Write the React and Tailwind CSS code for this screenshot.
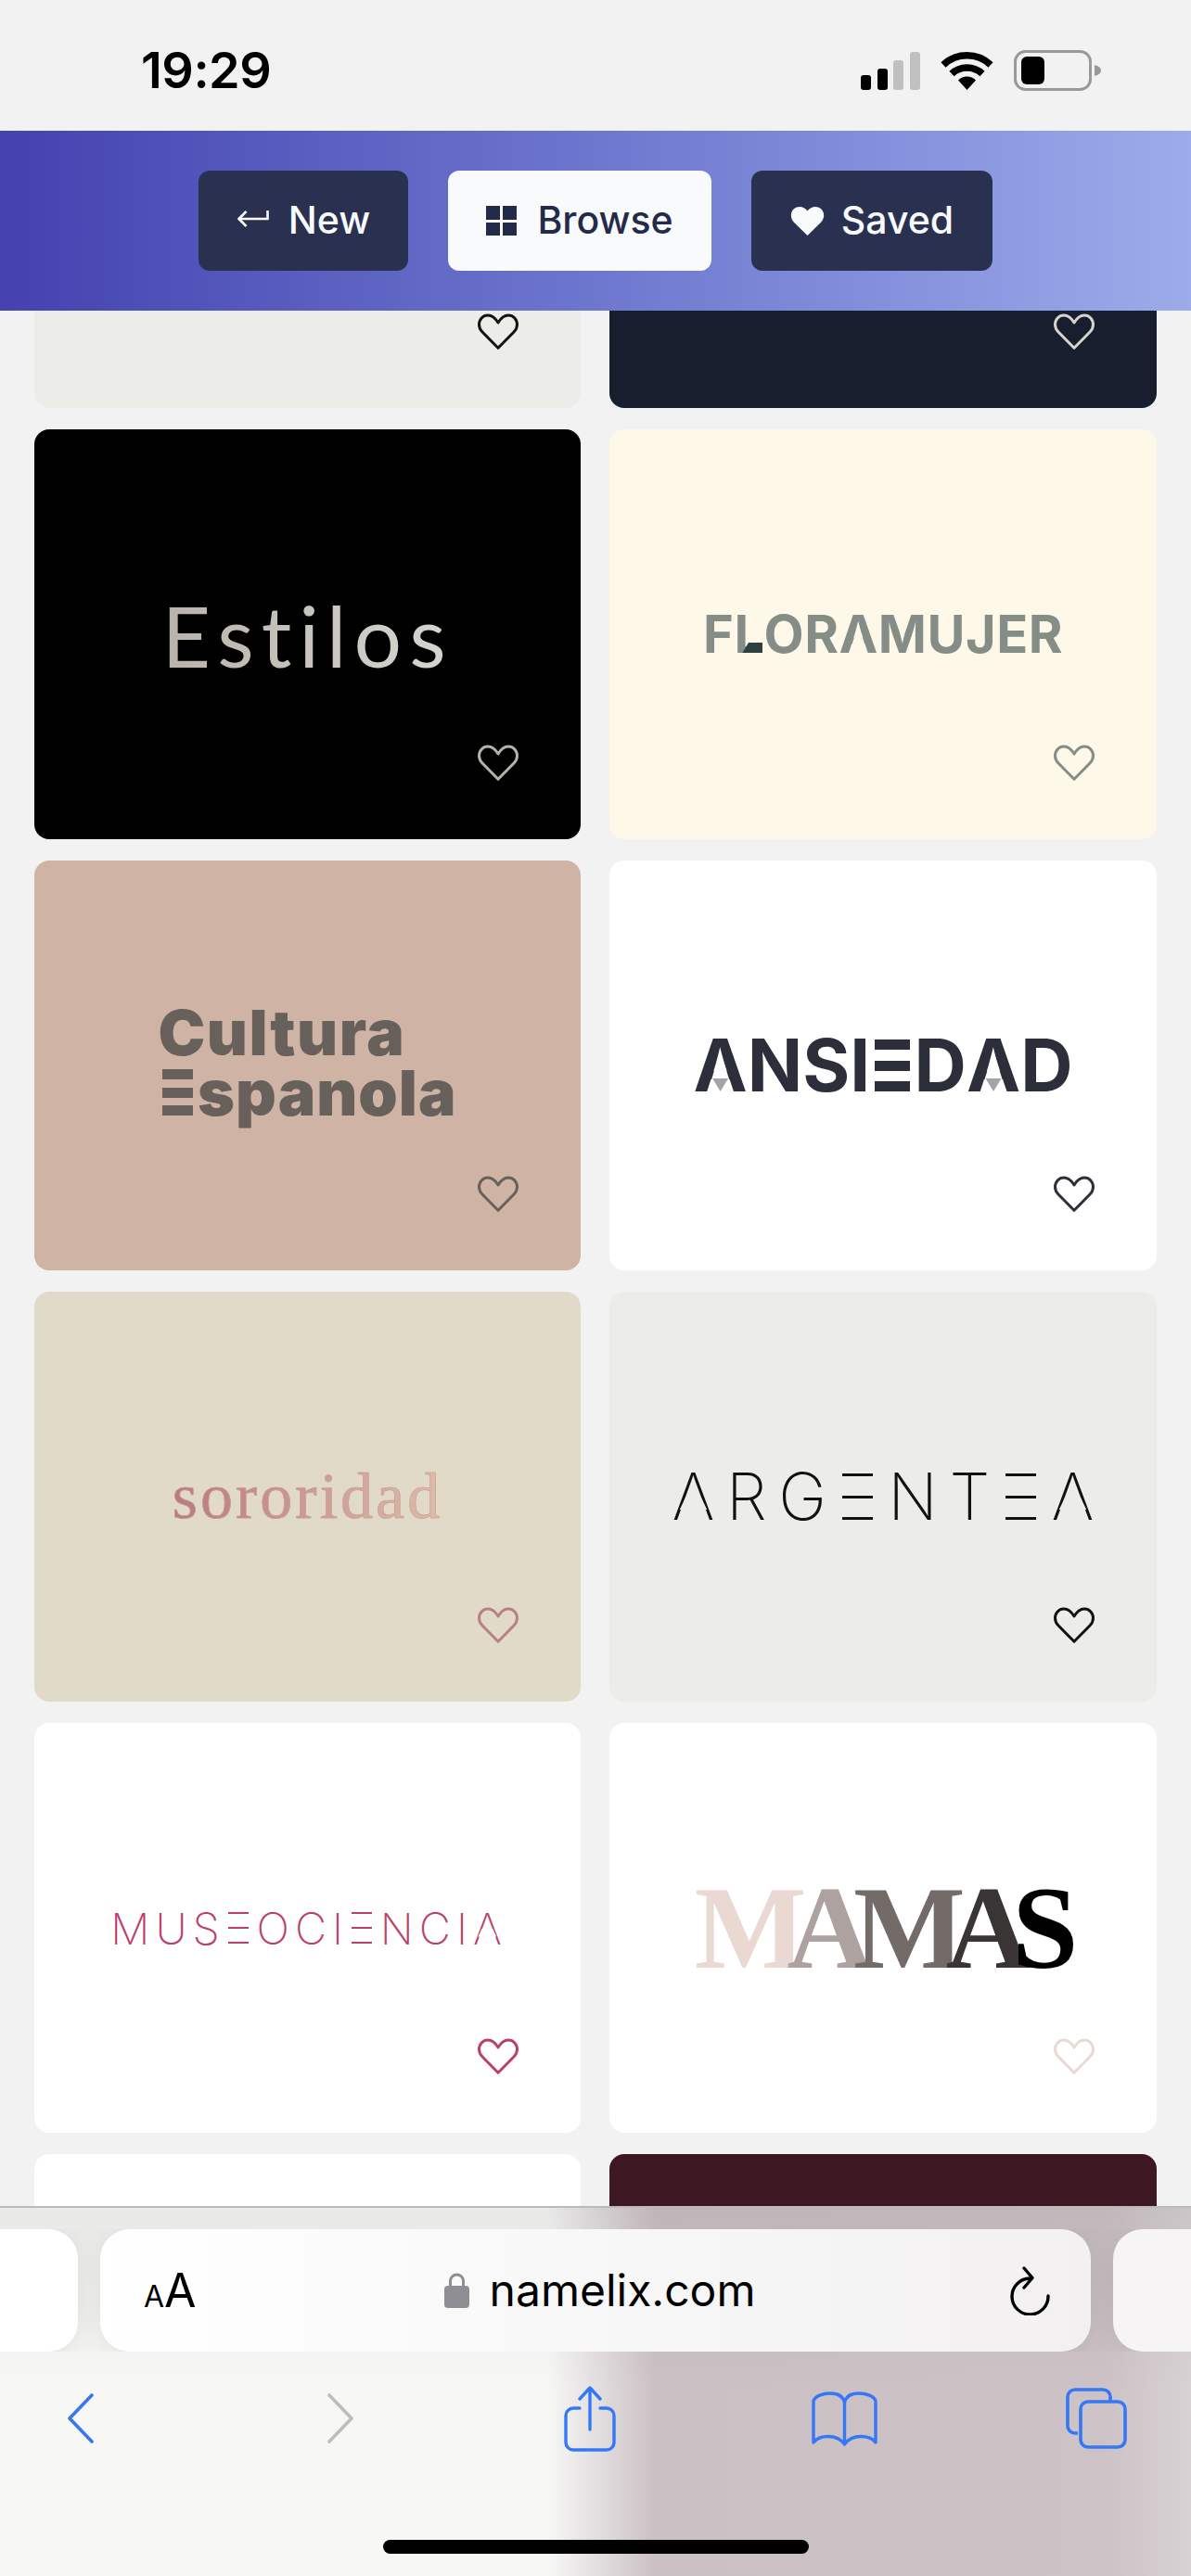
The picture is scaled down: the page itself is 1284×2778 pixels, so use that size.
// bare E: the letter stays as text but is shown as three bars
function BarE({ bar, thick, gap }) {
  return (
    <span className={`relative inline-block leading-none tracking-normal text-transparent ${gap}`}>
      E
      <span className="absolute inset-x-[0.06em] top-[0.137em] flex h-[0.727em] flex-col justify-between">
        <span className={`${bar} ${thick}`} />
        <span className={`${bar} ${thick}`} />
        <span className={`${bar} ${thick}`} />
      </span>
    </span>
  );
}

// A with no crossbar
function OpenA({ cover, cut, gap, children }) {
  return (
    <span className={`relative inline-block leading-none tracking-normal ${gap}`}>
      A
      <span className={`absolute inset-0 ${cover} ${cut}`} />
      {children}
    </span>
  );
}

function CardHeart({ className }) {
  return (
    <svg
      viewBox="0 0 44 39"
      fill="none"
      stroke="currentColor"
      strokeWidth="3"
      strokeLinejoin="round"
      className={`absolute right-[67px] bottom-[63px] h-[39px] w-[44px] ${className}`}
    >
      <path d="M22 10 C25 5 29 2 33 2 C38.5 2 42.5 6.5 42.5 12 C42.5 15.5 41 18 39 20 L22 37.3 L5 20 C3 18 1.5 15.5 1.5 12 C1.5 6.5 5.5 2 11 2 C15 2 19 5 22 10 Z" />
    </svg>
  );
}

const thinCut = "[clip-path:polygon(31%_52%,69%_52%,82%_70%,18%_70%)]";
const boldCut = "[clip-path:polygon(50%_30%,68%_73%,32%_73%)]";

const cards = [
  { bg: "bg-[#ecede8]", heart: "text-[#111111]" },
  { bg: "bg-[#171e2e]", heart: "text-[#d5d5cc]" },
  {
    bg: "bg-black",
    heart: "text-[#b5b3ab]",
    logo: (
      <span className="bg-linear-to-r from-[#b8b3aa] to-[#d6d6d1] bg-clip-text font-['Lato',sans-serif] text-[91px] leading-none font-normal tracking-[8px] text-transparent">
        Estilos
      </span>
    ),
  },
  {
    bg: "bg-[#fef8e8]",
    heart: "text-[#858d87]",
    logo: (
      <span className="text-[56px] leading-none font-bold tracking-[0.5px] text-[#858d87]">
        F
        <span className="relative inline-block">
          L
          <span className="absolute bottom-[8px] left-[9px] h-[11px] w-[22px] bg-[#2f4040] [clip-path:polygon(30%_0,100%_0,100%_100%,0_100%)]" />
        </span>
        OR
        <OpenA cover="bg-[#fef8e8]" cut={boldCut} gap="mr-[0.5px]" />
        MUJER
      </span>
    ),
  },
  {
    bg: "bg-[#cfb4a6]",
    heart: "text-[#68605a]",
    logo: (
      <div className="-mt-[4px] text-[68px] leading-[62px] font-black tracking-[1px] text-[#68605a]">
        <div className="tracking-[1.6px]">Cultura</div>
        <div>
          <BarE bar="bg-[#68605a]" thick="h-[11px]" gap="mr-[1px]" />
          spanola
        </div>
      </div>
    ),
  },
  {
    bg: "bg-white",
    heart: "text-[#2c2e3a]",
    logo: (
      <span className="text-[78px] leading-none font-bold text-[#2c2e3a]">
        <OpenA cover="bg-white" cut={boldCut}>
          <span className="absolute bottom-[11px] left-1/2 h-[14px] w-[17px] -translate-x-1/2 bg-[#a3a4a9] [clip-path:polygon(0_0,100%_0,50%_100%)]" />
        </OpenA>
        NSI
        <BarE bar="bg-[#2c2e3a]" thick="h-[11px]" />
        D
        <OpenA cover="bg-white" cut={boldCut}>
          <span className="absolute bottom-[11px] left-1/2 h-[14px] w-[17px] -translate-x-1/2 bg-[#a3a4a9] [clip-path:polygon(0_0,100%_0,50%_100%)]" />
        </OpenA>
        D
      </span>
    ),
  },
  {
    bg: "bg-[#e1dac8]",
    heart: "text-[#b97f82]",
    logo: (
      <span className="bg-linear-to-r from-[#b97a80] to-[#dcbca8] bg-clip-text font-['Liberation_Serif',serif] text-[70px] leading-none font-normal tracking-[3px] text-transparent [-webkit-text-stroke:0.6px_#c99f96]">
        sororidad
      </span>
    ),
  },
  {
    bg: "bg-[#ecede8]",
    heart: "text-[#111111]",
    logo: (
      <span className="text-[70px] leading-none font-extralight tracking-[12.5px] text-[#111111]">
        <OpenA cover="bg-[#ecede8]" cut={thinCut} gap="mr-[12.5px]" />
        RG
        <BarE bar="bg-[#111111]" thick="h-[3px]" gap="mr-[12.5px]" />
        NT
        <BarE bar="bg-[#111111]" thick="h-[3px]" gap="mr-[12.5px]" />
        <OpenA cover="bg-[#ecede8]" cut={thinCut} />
      </span>
    ),
  },
  {
    bg: "bg-white",
    heart: "text-[#bb3f6c]",
    logo: (
      <span className="-ml-[3px] text-[47px] leading-none font-extralight tracking-[6px] text-[#bb3f6c]">
        MUS
        <BarE bar="bg-[#bb3f6c]" thick="h-[2px]" gap="mr-[6px]" />
        OCI
        <BarE bar="bg-[#bb3f6c]" thick="h-[2px]" gap="mr-[6px]" />
        NCI
        <OpenA cover="bg-white" cut={thinCut} />
      </span>
    ),
  },
  {
    bg: "bg-white",
    heart: "text-[#ead9d3]",
    logo: (
      <span className="pr-[14px] font-['Liberation_Serif',serif] text-[128px] leading-none font-bold tracking-[-21px]">
        <span className="text-[#ead9d3]">M</span>
        <span className="text-[#aea2a0]">A</span>
        <span className="text-[#736b68]">M</span>
        <span className="text-[#3a3535]">A</span>
        <span className="text-black">S</span>
      </span>
    ),
  },
  { bg: "bg-white", heart: "text-white" },
  { bg: "bg-[#3d1722]", heart: "text-white" },
];

function StatusBar() {
  return (
    <div className="flex h-[141px] shrink-0 items-center justify-between bg-[#f2f2f2] pr-[97px] pl-[152px]">
      <span className="pt-[10px] text-[54px] leading-none font-semibold tracking-[-0.5px] text-black">19:29</span>
      <div className="flex items-center gap-[22px] pt-[10px]">
        <svg viewBox="0 0 64 42" className="h-[42px] w-[64px]">
          <rect x="0" y="26" width="11" height="16" rx="3" fill="#000" />
          <rect x="18" y="19" width="11" height="23" rx="3" fill="#000" />
          <rect x="35" y="10" width="11" height="32" rx="3" fill="#c0c0c0" />
          <rect x="53" y="1" width="11" height="41" rx="3" fill="#c0c0c0" />
        </svg>
        <svg viewBox="0 0 57 42" className="h-[42px] w-[57px]" fill="none" stroke="#000" strokeWidth="7.5">
          <path d="M3 15 A37 37 0 0 1 54 15" />
          <path d="M12 24.5 A24 24 0 0 1 45 24.5" />
          <path d="M28.5 42 L19 31.5 A13.5 13.5 0 0 1 38 31.5 Z" fill="#000" stroke="none" />
        </svg>
        <svg viewBox="0 0 94 44" className="h-[44px] w-[94px]">
          <rect x="1.5" y="1.5" width="81" height="41" rx="11" fill="none" stroke="#999" strokeWidth="3" />
          <rect x="8" y="7" width="25" height="30" rx="6" fill="#000" />
          <path d="M87 16 C91 17 94 19 94 22 C94 25 91 27 87 28 Z" fill="#999" />
        </svg>
      </div>
    </div>
  );
}

function Header() {
  return (
    <div className="z-10 flex h-[194px] shrink-0 items-center bg-linear-to-r from-[#4541b0] to-[#9dabea] pl-[214px]">
      <button className="flex h-[108px] w-[226px] items-center justify-center gap-[21px] rounded-[12px] bg-[#2a3150] text-[41px] font-medium text-[#f8fafc]">
        <svg viewBox="0 0 35 20" className="-mt-[4px] h-[20px] w-[35px]" fill="none" stroke="currentColor" strokeWidth="2.6">
          <path d="M33.5 1 V10 H2.5" />
          <path d="M10.5 2 L2.5 10 L10.5 18" />
        </svg>
        New
      </button>
      <button className="ml-[43px] flex h-[108px] w-[284px] items-center justify-center gap-[22px] rounded-[12px] bg-[#f8fafc] text-[41px] font-medium text-[#232a4a]">
        <span className="grid h-[32px] w-[33px] grid-cols-2 gap-[3px]">
          <span className="bg-[#232a4a]" />
          <span className="bg-[#232a4a]" />
          <span className="bg-[#232a4a]" />
          <span className="bg-[#232a4a]" />
        </span>
        Browse
      </button>
      <button className="ml-[43px] flex h-[108px] w-[260px] items-center justify-center gap-[18px] rounded-[12px] bg-[#2a3150] text-[41px] font-medium text-[#f8fafc]">
        <svg viewBox="0 0 24 21" className="h-[32px] w-[37px]" fill="currentColor">
          <path d="M12 21 L2.6 11.8 C-0.3 9 -0.3 4.6 2.4 2.2 C5.2 -0.3 9.6 0.2 12 3.6 C14.4 0.2 18.8 -0.3 21.6 2.2 C24.3 4.6 24.3 9 21.4 11.8 Z" />
        </svg>
        Saved
      </button>
    </div>
  );
}

function CardGrid() {
  return (
    <div className="min-h-0 flex-1 overflow-hidden pl-[37px]">
      <div className="-mt-[337px] grid grid-cols-[589px_590px] auto-rows-[442px] gap-x-[31px] gap-y-[23px]">
        {cards.map((card, i) => (
          <div key={i} className={`relative flex items-center justify-center rounded-[16px] ${card.bg}`}>
            {card.logo}
            {i < 10 && <CardHeart className={card.heart} />}
          </div>
        ))}
      </div>
    </div>
  );
}

function Toolbar() {
  return (
    <div className="z-10 flex h-[399px] shrink-0 flex-col border-t-2 border-[#bcbabb] bg-[linear-gradient(to_bottom,rgba(0,0,0,0.06),transparent_50%),linear-gradient(to_right,#f7f7f6_46%,#cbc1c4_55%,#cdc3c6_93%,#d8d2d5)]">
      <div className="mt-[23px] flex h-[132px] shrink-0 gap-[24px] overflow-hidden">
        <div className="-ml-[100px] w-[184px] shrink-0 rounded-[32px] bg-white shadow-[0_4px_30px_rgba(0,0,0,0.08)]" />
        <div className="flex w-[1068px] shrink-0 items-center rounded-[32px] bg-linear-to-r from-white to-[#f2f0f1] pr-[44px] pl-[47px] shadow-[0_4px_30px_rgba(0,0,0,0.08)]">
          <span className="flex w-[70px] items-baseline text-black">
            <span className="text-[32px] leading-none">A</span>
            <span className="text-[50px] leading-none">A</span>
          </span>
          <div className="flex flex-1 items-center justify-center gap-[22px] pl-[6px]">
            <svg viewBox="0 0 27 38" className="h-[38px] w-[27px]">
              <path d="M6.5 16 V9 a7 7 0 0 1 14 0 V16" fill="none" stroke="#8e8e93" strokeWidth="3" />
              <rect x="0" y="14" width="27" height="24" rx="4" fill="#8e8e93" />
            </svg>
            <span className="text-[48px] leading-none text-black">namelix.com</span>
          </div>
          <div className="flex w-[70px] justify-end">
            <svg viewBox="0 0 43 53" className="h-[53px] w-[43px]" fill="none" stroke="#000" strokeWidth="3.4" strokeLinecap="round" strokeLinejoin="round">
              <path d="M21 13 A19.5 19.5 0 1 0 41 32" />
              <path d="M15 2 L24 12.5 L15 23" />
            </svg>
          </div>
        </div>
        <div className="w-[120px] shrink-0 rounded-[32px] bg-[#f6f4f5] shadow-[0_4px_30px_rgba(0,0,0,0.08)]" />
      </div>
      <div className="mt-[36px] flex h-[72px] shrink-0 items-center pl-[72px]">
        <svg viewBox="0 0 30 54" className="h-[54px] w-[30px]" fill="none" stroke="#3478f6" strokeWidth="3.6" strokeLinecap="round" strokeLinejoin="round">
          <path d="M27 2 L3 27 L27 52" />
        </svg>
        <svg viewBox="0 0 30 54" className="ml-[250px] h-[54px] w-[30px]" fill="none" stroke="#bdbdbd" strokeWidth="3.6" strokeLinecap="round" strokeLinejoin="round">
          <path d="M3 2 L27 27 L3 52" />
        </svg>
        <svg viewBox="0 0 56 71" className="ml-[226px] h-[71px] w-[56px]" fill="none" stroke="#3478f6" strokeWidth="3.4" strokeLinecap="round" strokeLinejoin="round">
          <path d="M17 24 H10 a8 8 0 0 0 -8 8 V61 a8 8 0 0 0 8 8 H46 a8 8 0 0 0 8 -8 V32 a8 8 0 0 0 -8 -8 H39" />
          <path d="M28 47 V3" />
          <path d="M17 14 L28 2 L39 14" />
        </svg>
        <svg viewBox="0 0 71 59" className="ml-[211px] h-[59px] w-[71px]" fill="none" stroke="#3478f6" strokeWidth="3.4" strokeLinejoin="round">
          <path d="M35.5 12 C34 5 28 2 20 2 C12 2 4 5 2 10 V55 C8 47 27 45 35.5 57 C44 45 63 47 69 55 V10 C67 5 59 2 51 2 C43 2 37 5 35.5 12 Z M35.5 12 V57" />
        </svg>
        <svg viewBox="0 0 66 66" className="ml-[203px] h-[66px] w-[66px]" fill="none" stroke="#3478f6" strokeWidth="3.6" strokeLinejoin="round">
          <rect x="16" y="15" width="48" height="49" rx="8" />
          <path d="M13 49 H10 a8 8 0 0 1 -8 -8 V10 a8 8 0 0 1 8 -8 H40 a8 8 0 0 1 8 8 V15" />
        </svg>
      </div>
      <div className="mt-[auto] mb-[24px] h-[15px] w-[459px] self-center rounded-full bg-black" />
    </div>
  );
}

export default function App() {
  return (
    <div className="flex h-[2778px] w-[1284px] flex-col overflow-hidden bg-[#f2f2f2] font-[Inter,sans-serif]">
      <StatusBar />
      <Header />
      <CardGrid />
      <Toolbar />
    </div>
  );
}
